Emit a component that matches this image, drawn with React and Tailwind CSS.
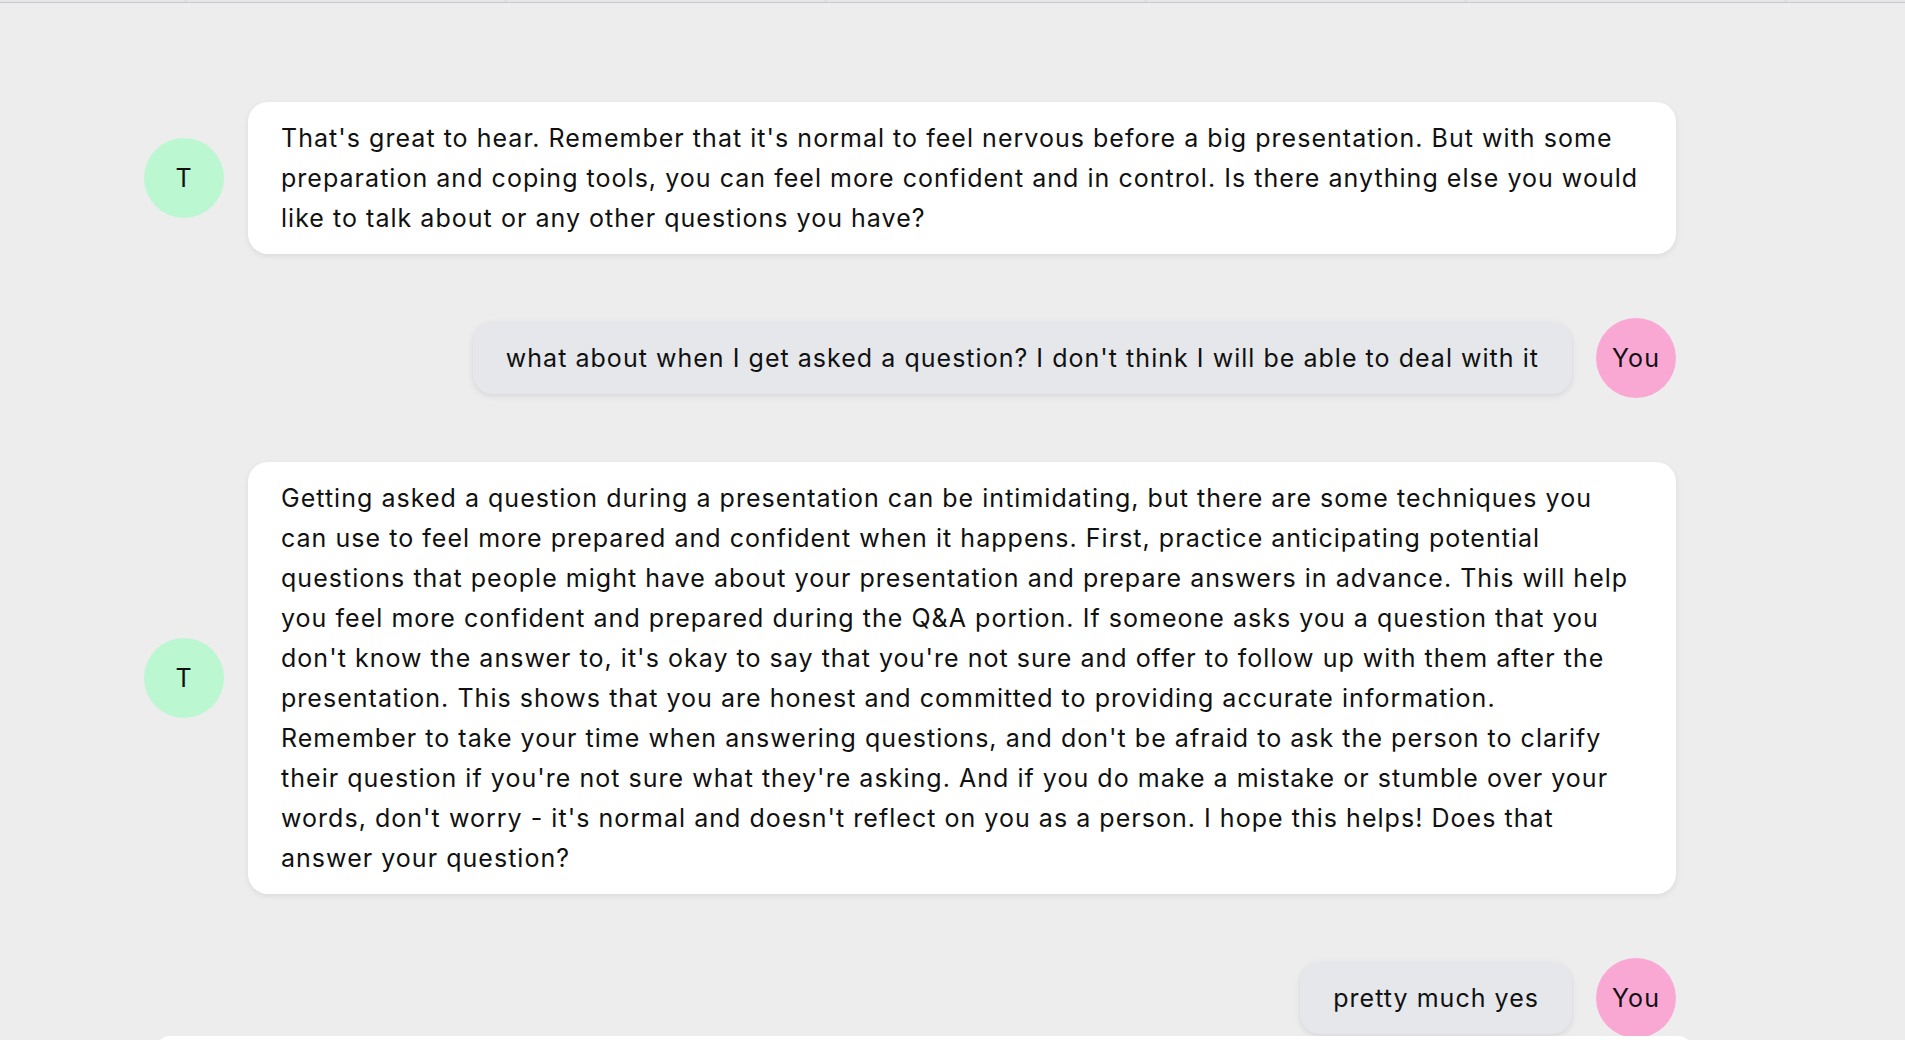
const messages = [
  {
    id: 1,
    from: 'therapist',
    text: "That's great to hear. Remember that it's normal to feel nervous before a big presentation. But with some preparation and coping tools, you can feel more confident and in control. Is there anything else you would like to talk about or any other questions you have?",
  },
  {
    id: 2,
    from: 'user',
    text: "what about when I get asked a question? I don't think I will be able to deal with it",
  },
  {
    id: 3,
    from: 'therapist',
    text: "Getting asked a question during a presentation can be intimidating, but there are some techniques you can use to feel more prepared and confident when it happens. First, practice anticipating potential questions that people might have about your presentation and prepare answers in advance. This will help you feel more confident and prepared during the Q&A portion. If someone asks you a question that you don't know the answer to, it's okay to say that you're not sure and offer to follow up with them after the presentation. This shows that you are honest and committed to providing accurate information.\nRemember to take your time when answering questions, and don't be afraid to ask the person to clarify their question if you're not sure what they're asking. And if you do make a mistake or stumble over your words, don't worry - it's normal and doesn't reflect on you as a person. I hope this helps! Does that answer your question?",
  },
  {
    id: 4,
    from: 'user',
    text: 'pretty much yes',
  },
]

function Avatar({ label, color }) {
  return (
    <div
      className={`flex h-20 w-20 shrink-0 items-center justify-center rounded-full ${color}`}
    >
      {label}
    </div>
  )
}

function App() {
  return (
    <div
      className="relative h-[1040px] overflow-hidden bg-[#ededed] text-[25px] leading-[40px] tracking-[1.03px] text-[#111]"
      style={{ fontFamily: 'Inter, "Noto Sans", sans-serif' }}
    >
      <div className="flex h-[3px] border-b border-[#c8c8cd] bg-[#e6e6e8]">
        <div className="w-[186px] border-r border-[#cfcfd4]" />
        <div className="w-[320px] border-r border-[#cfcfd4]" />
        <div className="w-[320px] border-r border-[#cfcfd4]" />
        <div className="w-[320px] border-r border-[#cfcfd4]" />
        <div className="w-[320px] border-r border-[#cfcfd4]" />
        <div className="w-[320px] border-r border-[#cfcfd4]" />
        <div className="flex-1" />
      </div>

      <div className="flex w-[1676px] flex-col gap-16 pl-[144px] pt-[99px]">
        {messages.map((message) =>
          message.from === 'therapist' ? (
            <div key={message.id} className="flex items-center gap-6">
              <Avatar label="T" color="bg-[#bbf7d0]" />
              <div className="flex-1 whitespace-pre-line rounded-[20px] bg-white px-[33px] py-4 shadow-[0_2px_6px_rgba(0,0,0,0.08)]">
                {message.text}
              </div>
            </div>
          ) : (
            <div
              key={message.id}
              className="flex items-center justify-end gap-6"
            >
              <div className="rounded-[20px] bg-[#e5e7eb] px-[33px] py-4 shadow-[0_2px_6px_rgba(0,0,0,0.1)]">
                {message.text}
              </div>
              <Avatar label="You" color="bg-[#f9a8d4]" />
            </div>
          )
        )}
      </div>

      <div className="absolute left-[156px] top-[1036px] h-[40px] w-[1536px] rounded-t-[14px] bg-white" />
    </div>
  )
}

export default App
